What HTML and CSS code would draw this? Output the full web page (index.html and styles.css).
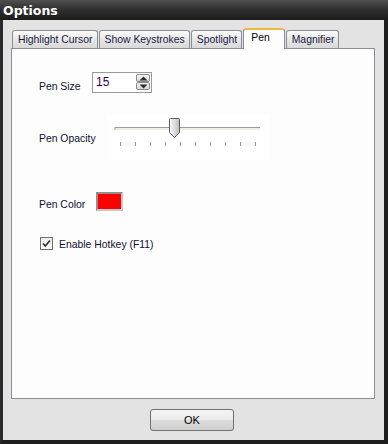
FILE: index.html
```html
<!DOCTYPE html>
<html lang="en">

<head>
    <meta charset="UTF-8">
    <title>Options</title>
    <link rel="stylesheet" href="styles.css">
</head>

<body>
    <div class="window">
        <div class="titlebar">Options</div>
        <div class="client">
            <ul class="tabs">
                <li class="tab">Highlight Cursor</li>
                <li class="tab">Show Keystrokes</li>
                <li class="tab">Spotlight</li>
                <li class="tab selected">Pen</li>
                <li class="tab">Magnifier</li>
            </ul>
            <div class="panel">
                <div class="row row-size">
                    <label class="label">Pen Size</label>
                    <div class="spin">
                        <span class="spin-value">15</span>
                        <div class="spin-buttons">
                            <span class="spin-btn">
                                <svg width="9" height="5" viewBox="0 0 9 5"><path d="M4.5 0.5 L8.5 4.5 L0.5 4.5 Z" fill="#2b2b2b"/></svg>
                            </span>
                            <span class="spin-btn">
                                <svg width="9" height="5" viewBox="0 0 9 5"><path d="M0.5 0.5 L8.5 0.5 L4.5 4.5 Z" fill="#2b2b2b"/></svg>
                            </span>
                        </div>
                    </div>
                </div>
                <div class="row row-opacity">
                    <label class="label">Pen Opacity</label>
                    <div class="slider">
                        <svg width="163" height="45" viewBox="0 0 163 45">
                            <rect x="8" y="12" width="145" height="3" fill="#efeee5"/>
                            <line x1="8" y1="12.5" x2="153" y2="12.5" stroke="#9c9c9c"/>
                            <line x1="8" y1="12" x2="8" y2="15" stroke="#9c9c9c"/>
                            <g stroke="#9a9a9a">
                                <line x1="13.5" y1="27" x2="13.5" y2="31"/>
                                <line x1="28.5" y1="27" x2="28.5" y2="31"/>
                                <line x1="43.5" y1="27" x2="43.5" y2="31"/>
                                <line x1="58.5" y1="27" x2="58.5" y2="31"/>
                                <line x1="73.5" y1="27" x2="73.5" y2="31"/>
                                <line x1="88.5" y1="27" x2="88.5" y2="31"/>
                                <line x1="103.5" y1="27" x2="103.5" y2="31"/>
                                <line x1="118.5" y1="27" x2="118.5" y2="31"/>
                                <line x1="133.5" y1="27" x2="133.5" y2="31"/>
                                <line x1="148.5" y1="27" x2="148.5" y2="31"/>
                            </g>
                            <defs>
                                <linearGradient id="thumb" x1="0" y1="0" x2="1" y2="0">
                                    <stop offset="0" stop-color="#f4f4f4"/>
                                    <stop offset="0.5" stop-color="#dedede"/>
                                    <stop offset="1" stop-color="#b9b9b9"/>
                                </linearGradient>
                            </defs>
                            <path d="M62.5 4.5 Q62.5 3.5 63.5 3.5 L71.5 3.5 Q72.5 3.5 72.5 4.5 L72.5 17.5 L67.5 22.5 L62.5 17.5 Z" fill="url(#thumb)" stroke="#5c5c5c"/>
                            <path d="M63.5 5 L63.5 17 L67.5 21" fill="none" stroke="#ffffff"/>
                        </svg>
                    </div>
                </div>
                <div class="row row-color">
                    <label class="label">Pen Color</label>
                    <span class="swatch"></span>
                </div>
                <div class="row row-check">
                    <span class="checkbox">
                        <svg width="11" height="11" viewBox="0 0 11 11"><path d="M2 5.5 L4.3 8 L9 2.5" fill="none" stroke="#333" stroke-width="1.8"/></svg>
                    </span>
                    <span class="check-text">Enable Hotkey (F11)</span>
                </div>
            </div>
            <div class="buttons">
                <button class="btn">OK</button>
            </div>
        </div>
    </div>
</body>

</html>
```

FILE: styles.css
```css
body {
    margin: 0;
    font-family: 'Liberation Sans', Arial, sans-serif;
    font-size: 10.4px;
    color: #101030;
}

.window {
    width: 388px;
    height: 444px;
    box-sizing: border-box;
    border-left: 3px solid #2a2a2a;
    border-right: 4px solid #1e1e1e;
    border-bottom: 4px solid #1e1e1e;
    background-color: #e3e3e3;
    display: flex;
    flex-direction: column;
}

.titlebar {
    height: 20px;
    margin-left: -3px;
    margin-right: -4px;
    padding-left: 3px;
    line-height: 22px;
    background: linear-gradient(#505050, #2e2e2e 50%, #1c1c1c);
    color: #ffffff;
    font-family: 'DejaVu Sans', Verdana, sans-serif;
    font-weight: bold;
    font-size: 12.5px;
}

.client {
    flex: 1;
    padding: 8px 9px 0 8px;
    display: flex;
    flex-direction: column;
}

.tabs {
    list-style: none;
    margin: 0;
    padding: 0 0 0 1px;
    display: flex;
    align-items: flex-end;
    height: 21px;
    position: relative;
    z-index: 1;
}

.tab {
    height: 17px;
    line-height: 18px;
    padding: 0 4px 0 5px;
    margin-right: 1px;
    border: 1px solid #8c8e94;
    border-bottom: none;
    border-radius: 3px 3px 0 0;
    background: linear-gradient(#fbfbfb, #e8e8e8 50%, #d9d9d9);
    color: #1a1a40;
    margin-bottom: 1px;
}

.tab.selected {
    height: 19px;
    line-height: 16px;
    padding: 0 14px 0 7px;
    margin: 0 1px 0 0;
    background: #fdfdfd;
    border-top: 2px solid #f0b840;
    border-bottom: none;
    color: #000;
}

.panel {
    height: 349px;
    background-color: #fdfdfd;
    border: 1px solid #8c8e94;
    margin-top: -1px;
    display: flex;
    flex-direction: column;
    padding-left: 27px;
}

.row {
    display: flex;
    align-items: flex-end;
}

.label {
    width: 53px;
    line-height: 13px;
}

.row-size {
    margin-top: 23px;
}

.spin {
    width: 58px;
    height: 19px;
    border: 1px solid #9a9a9a;
    background: #ffffff;
    display: flex;
    justify-content: space-between;
    align-items: flex-start;
}

.spin-value {
    padding: 2px 0 0 3px;
    font-size: 12px;
    color: #300050;
}

.spin-buttons {
    display: flex;
    flex-direction: column;
    padding: 1px 1px 0 0;
}

.spin-btn {
    width: 12px;
    height: 6px;
    border: 1px solid #8a8a8a;
    border-radius: 2px;
    background: linear-gradient(#f6f6f6, #d8d8d8);
    display: flex;
    align-items: center;
    justify-content: center;
}

.row-opacity {
    margin-top: 22px;
    align-items: center;
}

.row-opacity .label {
    width: 68px;
    padding-top: 2px;
}

.slider {
    width: 163px;
    height: 45px;
    background: #ffffff;
}

.slider svg {
    display: block;
}

.row-color {
    margin-top: 32px;
}

.row-color .label {
    width: 57px;
}

.swatch {
    width: 23px;
    height: 15px;
    background: #ff0000;
    border: 2px solid;
    border-color: #8f8f8f #c8c8c8 #c8c8c8 #8f8f8f;
}

.row-check {
    margin-top: 26px;
    margin-left: 1px;
    align-items: center;
}

.checkbox {
    width: 11px;
    height: 11px;
    border: 1px solid #6f6f6f;
    background: linear-gradient(#f0f0f0, #ffffff);
    display: flex;
    margin-right: 6px;
}

.check-text {
    padding-top: 1px;
}

.buttons {
    display: flex;
    justify-content: center;
    padding-top: 10px;
}

.btn {
    width: 84px;
    height: 22px;
    border: 1px solid #707070;
    border-radius: 3px;
    background: linear-gradient(#f4f4f4, #ebebeb 50%, #dcdcdc 51%, #cfcfcf);
    font-family: 'Liberation Sans', Arial, sans-serif;
    font-size: 11px;
    color: #000;
    padding: 0;
    margin-left: -2px;
}
```
